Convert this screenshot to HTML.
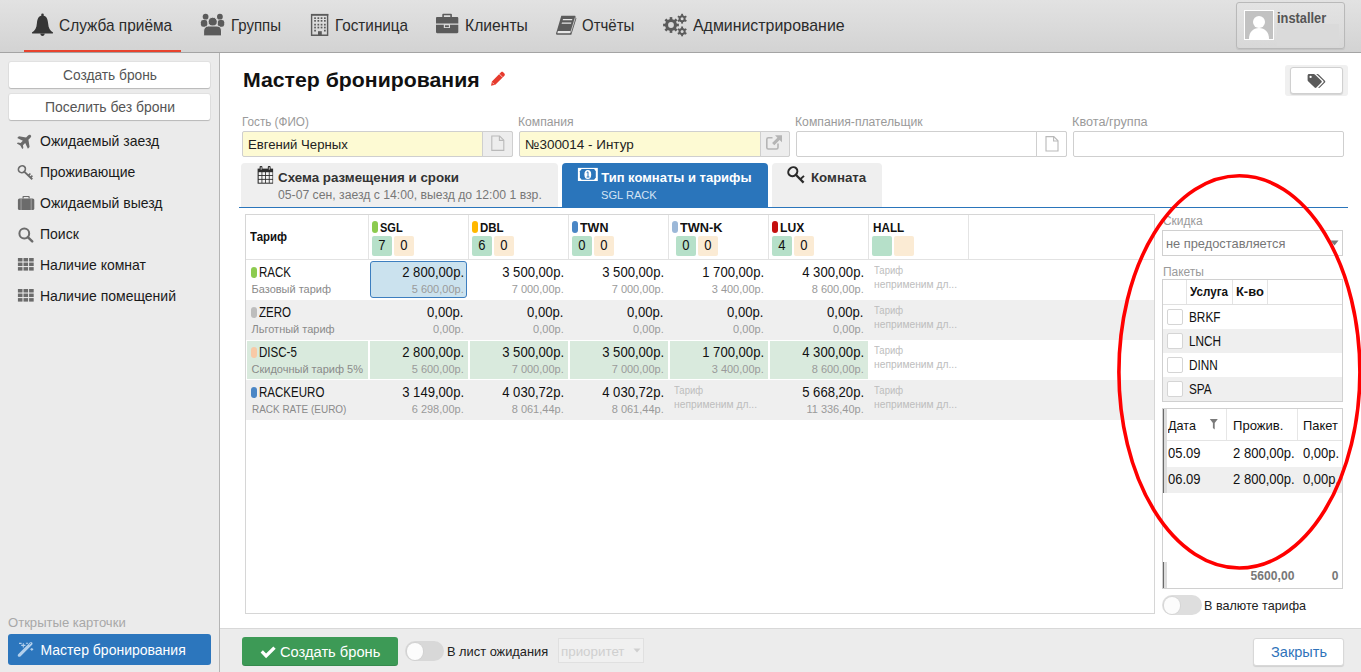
<!DOCTYPE html>
<html><head><meta charset="utf-8"><style>
html,body{margin:0;padding:0;}
body{width:1361px;height:672px;overflow:hidden;position:relative;background:#fff;font-family:"Liberation Sans",sans-serif;}
svg{display:block;}
</style></head><body>
<div style="position:absolute;left:0px;top:0px;width:1361px;height:52px;background:linear-gradient(#e2e2e2,#d3d3d3);"></div>
<div style="position:absolute;left:0px;top:52px;width:1361px;height:1px;background:#a4a4a4;"></div>
<div style="position:absolute;left:24px;top:50px;width:157px;height:2px;background:#e8432d;"></div>
<div style="position:absolute;left:1236px;top:2px;width:109px;height:47px;background:linear-gradient(#e3e3e3,#d8d8d8);border:1px solid #b9b9b9;border-radius:3px;box-sizing:border-box;box-shadow:0 1px 1px rgba(0,0,0,.08);"></div>
<div style="position:absolute;left:1277px;top:24px;width:62px;height:22px;background:#dadada;"></div>
<div style="position:absolute;left:1244px;top:10px;width:30px;height:30px;background:#c2c2c2;border:1px solid #fff;box-sizing:border-box;overflow:hidden;"><svg width="28" height="28" viewBox="0 0 28 28"><circle cx="14" cy="11" r="6" fill="#fff"/><path d="M4 28c0-7 4-11 10-11s10 4 10 11z" fill="#fff"/></svg></div>
<div style="position:absolute;left:0px;top:53px;width:219px;height:619px;background:#ebebeb;"></div>
<div style="position:absolute;left:219px;top:53px;width:1px;height:619px;background:#b5b5b5;"></div>
<div style="position:absolute;left:9px;top:62px;width:201px;height:26px;background:#fff;border-radius:2px;box-shadow:0 1px 1px rgba(0,0,0,.18),0 0 0 1px rgba(0,0,0,.04);"></div>
<div style="position:absolute;left:9px;top:94px;width:201px;height:26px;background:#fff;border-radius:2px;box-shadow:0 1px 1px rgba(0,0,0,.18),0 0 0 1px rgba(0,0,0,.04);"></div>
<div style="position:absolute;left:8px;top:634px;width:203px;height:31px;background:#2c76bd;border-radius:3px;"></div>
<div style="position:absolute;left:1285px;top:65px;width:63px;height:31px;background:#f0f0f0;border-radius:3px;"></div>
<div style="position:absolute;left:1290px;top:67px;width:53px;height:27px;background:#fff;border:1px solid #d0d0d0;border-radius:3px;box-sizing:border-box;box-shadow:0 1px 1px rgba(0,0,0,.12);"></div>
<div style="position:absolute;left:242px;top:131px;width:271px;height:26px;background:#fdfad3;border:1px solid #cfcfcf;box-sizing:border-box;border-radius:2px;"></div>
<div style="position:absolute;left:482px;top:131px;width:31px;height:26px;background:#ededed;border:1px solid #cfcfcf;box-sizing:border-box;border-radius:0 2px 2px 0;"></div>
<div style="position:absolute;left:519px;top:131px;width:271px;height:26px;background:#fdfad3;border:1px solid #cfcfcf;box-sizing:border-box;border-radius:2px;"></div>
<div style="position:absolute;left:760px;top:131px;width:30px;height:26px;background:#ededed;border:1px solid #cfcfcf;box-sizing:border-box;border-radius:0 2px 2px 0;"></div>
<div style="position:absolute;left:796px;top:131px;width:271px;height:26px;background:#fff;border:1px solid #cfcfcf;box-sizing:border-box;border-radius:2px;"></div>
<div style="position:absolute;left:1036px;top:131px;width:31px;height:26px;background:#fff;border:1px solid #cfcfcf;box-sizing:border-box;border-radius:0 2px 2px 0;"></div>
<div style="position:absolute;left:1073px;top:131px;width:271px;height:26px;background:#fff;border:1px solid #cfcfcf;box-sizing:border-box;border-radius:2px;"></div>
<div style="position:absolute;left:241px;top:163px;width:317px;height:44px;background:#efefef;border-radius:4px 4px 0 0;"></div>
<div style="position:absolute;left:562px;top:163px;width:206px;height:45px;background:#2a75bb;border-radius:4px 4px 0 0;"></div>
<div style="position:absolute;left:772px;top:163px;width:110px;height:44px;background:#efefef;border-radius:4px 4px 0 0;"></div>
<div style="position:absolute;left:239px;top:207px;width:1109px;height:1px;background:#2a75bb;"></div>
<div style="position:absolute;left:245px;top:214px;width:910px;height:400px;border:1px solid #d6d6d6;box-sizing:border-box;background:#fff;"></div>
<div style="position:absolute;left:246px;top:259px;width:908px;height:1px;background:#e2e2e2;"></div>
<div style="position:absolute;left:368px;top:215px;width:1px;height:44px;background:#e4e4e4;"></div>
<div style="position:absolute;left:468px;top:215px;width:1px;height:44px;background:#e4e4e4;"></div>
<div style="position:absolute;left:568px;top:215px;width:1px;height:44px;background:#e4e4e4;"></div>
<div style="position:absolute;left:668px;top:215px;width:1px;height:44px;background:#e4e4e4;"></div>
<div style="position:absolute;left:768px;top:215px;width:1px;height:44px;background:#e4e4e4;"></div>
<div style="position:absolute;left:868px;top:215px;width:1px;height:44px;background:#e4e4e4;"></div>
<div style="position:absolute;left:968px;top:215px;width:1px;height:44px;background:#e4e4e4;"></div>
<div style="position:absolute;left:246px;top:300px;width:908px;height:40px;background:#efefef;"></div>
<div style="position:absolute;left:246px;top:380px;width:908px;height:40px;background:#efefef;"></div>
<div style="position:absolute;left:247px;top:341px;width:121px;height:38px;background:#d9eadd;"></div>
<div style="position:absolute;left:370px;top:341px;width:98px;height:38px;background:#d9eadd;"></div>
<div style="position:absolute;left:470px;top:341px;width:98px;height:38px;background:#d9eadd;"></div>
<div style="position:absolute;left:570px;top:341px;width:98px;height:38px;background:#d9eadd;"></div>
<div style="position:absolute;left:670px;top:341px;width:98px;height:38px;background:#d9eadd;"></div>
<div style="position:absolute;left:770px;top:341px;width:98px;height:38px;background:#d9eadd;"></div>
<div style="position:absolute;left:370px;top:261px;width:97px;height:37px;background:#cbe2ee;border:1px solid #3d7ebf;border-radius:3px;box-sizing:border-box;"></div>
<div style="position:absolute;left:372px;top:221px;width:6px;height:12px;background:#8ccb4f;border-radius:3px;"></div>
<div style="position:absolute;left:372px;top:236px;width:20px;height:20px;background:#b6e0c9;border-radius:2px;"></div>
<div style="position:absolute;left:394px;top:236px;width:20px;height:20px;background:#fbebd4;border-radius:2px;"></div>
<div style="position:absolute;left:472px;top:221px;width:6px;height:12px;background:#ffb800;border-radius:3px;"></div>
<div style="position:absolute;left:472px;top:236px;width:20px;height:20px;background:#b6e0c9;border-radius:2px;"></div>
<div style="position:absolute;left:494px;top:236px;width:20px;height:20px;background:#fbebd4;border-radius:2px;"></div>
<div style="position:absolute;left:572px;top:221px;width:6px;height:12px;background:#4a86c5;border-radius:3px;"></div>
<div style="position:absolute;left:572px;top:236px;width:20px;height:20px;background:#b6e0c9;border-radius:2px;"></div>
<div style="position:absolute;left:594px;top:236px;width:20px;height:20px;background:#fbebd4;border-radius:2px;"></div>
<div style="position:absolute;left:672px;top:221px;width:6px;height:12px;background:#9cb8d8;border-radius:3px;"></div>
<div style="position:absolute;left:676px;top:236px;width:20px;height:20px;background:#b6e0c9;border-radius:2px;"></div>
<div style="position:absolute;left:698px;top:236px;width:20px;height:20px;background:#fbebd4;border-radius:2px;"></div>
<div style="position:absolute;left:772px;top:221px;width:6px;height:12px;background:#c40f0f;border-radius:3px;"></div>
<div style="position:absolute;left:772px;top:236px;width:20px;height:20px;background:#b6e0c9;border-radius:2px;"></div>
<div style="position:absolute;left:794px;top:236px;width:20px;height:20px;background:#fbebd4;border-radius:2px;"></div>
<div style="position:absolute;left:872px;top:236px;width:20px;height:20px;background:#b6e0c9;border-radius:2px;"></div>
<div style="position:absolute;left:894px;top:236px;width:20px;height:20px;background:#fbebd4;border-radius:2px;"></div>
<div style="position:absolute;left:251px;top:266.5px;width:6px;height:11.5px;background:#8ccb4f;border-radius:3px;"></div>
<div style="position:absolute;left:251px;top:306.5px;width:6px;height:11.5px;background:#bdbdbd;border-radius:3px;"></div>
<div style="position:absolute;left:251px;top:346.5px;width:6px;height:11.5px;background:#f8c9a6;border-radius:3px;"></div>
<div style="position:absolute;left:251px;top:386.5px;width:6px;height:11.5px;background:#4a86c5;border-radius:3px;"></div>
<div style="position:absolute;left:1162px;top:230px;width:181px;height:26px;background:#fff;border:1px solid #d0d0d0;box-sizing:border-box;"></div>
<svg style="position:absolute;left:1330px;top:240px;" width="9" height="6" viewBox="0 9 6" preserveAspectRatio="none"><path d="M0.5 0.5h8L4.5 5.5z" fill="#777"/></svg>
<div style="position:absolute;left:1162px;top:279px;width:181px;height:123px;background:#fff;border:1px solid #d0d0d0;box-sizing:border-box;"></div>
<div style="position:absolute;left:1163px;top:304px;width:179px;height:1px;background:#e0e0e0;"></div>
<div style="position:absolute;left:1186px;top:280px;width:1px;height:24px;background:#e4e4e4;"></div>
<div style="position:absolute;left:1232px;top:280px;width:1px;height:24px;background:#e4e4e4;"></div>
<div style="position:absolute;left:1267px;top:280px;width:1px;height:24px;background:#e4e4e4;"></div>
<div style="position:absolute;left:1163px;top:329px;width:179px;height:24px;background:#efefef;"></div>
<div style="position:absolute;left:1163px;top:377px;width:179px;height:24px;background:#efefef;"></div>
<div style="position:absolute;left:1167px;top:309px;width:16px;height:16px;background:#fff;border:1px solid #d5d5d5;border-radius:2px;box-sizing:border-box;"></div>
<div style="position:absolute;left:1167px;top:333px;width:16px;height:16px;background:#fff;border:1px solid #d5d5d5;border-radius:2px;box-sizing:border-box;"></div>
<div style="position:absolute;left:1167px;top:357px;width:16px;height:16px;background:#fff;border:1px solid #d5d5d5;border-radius:2px;box-sizing:border-box;"></div>
<div style="position:absolute;left:1167px;top:381px;width:16px;height:16px;background:#fff;border:1px solid #d5d5d5;border-radius:2px;box-sizing:border-box;"></div>
<div style="position:absolute;left:1162px;top:408px;width:181px;height:181px;background:#fff;border:1px solid #d0d0d0;box-sizing:border-box;"></div>
<div style="position:absolute;left:1163px;top:440px;width:179px;height:1px;background:#e4e4e4;"></div>
<div style="position:absolute;left:1165px;top:467px;width:177px;height:26px;background:#efefef;"></div>
<div style="position:absolute;left:1163px;top:409px;width:1px;height:84px;background:#6a6a6a;"></div>
<div style="position:absolute;left:1164px;top:409px;width:3px;height:84px;background:#dcdcdc;"></div>
<div style="position:absolute;left:1163px;top:562px;width:1px;height:26px;background:#6a6a6a;"></div>
<div style="position:absolute;left:1164px;top:562px;width:3px;height:26px;background:#dcdcdc;"></div>
<div style="position:absolute;left:1226px;top:409px;width:1px;height:31px;background:#e6e6e6;"></div>
<div style="position:absolute;left:1297px;top:409px;width:1px;height:31px;background:#e6e6e6;"></div>
<div style="position:absolute;left:1162px;top:595px;width:40px;height:20px;background:#dedede;border-radius:10px;"></div>
<div style="position:absolute;left:1163.5px;top:597px;width:16.5px;height:16.5px;background:#fcfcfc;border-radius:50%;box-shadow:0 0 0 1px #d6d6d6;"></div>
<div style="position:absolute;left:220px;top:628px;width:1141px;height:44px;background:#ececec;"></div>
<div style="position:absolute;left:220px;top:628px;width:1141px;height:1px;background:#d8d8d8;"></div>
<div style="position:absolute;left:242px;top:637px;width:156px;height:29px;background:#3d9a56;border-radius:3px;box-shadow:inset 0 -1px 0 rgba(0,0,0,.1);"></div>
<div style="position:absolute;left:405px;top:641px;width:39px;height:20px;background:#d8d8d8;border-radius:10px;"></div>
<div style="position:absolute;left:406.5px;top:643px;width:16.5px;height:16.5px;background:#fcfcfc;border-radius:50%;box-shadow:0 0 0 1px #d2d2d2;"></div>
<div style="position:absolute;left:558px;top:638px;width:86px;height:25px;background:#f0f0f0;border:1px solid #e0e0e0;box-sizing:border-box;"></div>
<svg style="position:absolute;left:633px;top:648px;" width="8" height="5" viewBox="0 8 5" preserveAspectRatio="none"><path d="M0.5 0.5h7L4 4.5z" fill="#cfcfcf"/></svg>
<div style="position:absolute;left:1253px;top:638px;width:91px;height:28px;background:#fff;border:1px solid #d8d8d8;border-radius:3px;box-sizing:border-box;box-shadow:0 1px 1px rgba(0,0,0,.12);"></div>
<svg style="position:absolute;left:30px;top:12px;" width="25" height="25" viewBox="30 12 25 25"><circle cx="42.5" cy="14.9" r="1.3" fill="#363636"/><path d="M42.5 15.4C38.2 15.6 37.2 19.3 36.9 23.2 36.6 28 35 30.6 31.9 32.6L32.2 33.6H52.8L53.1 32.6C50 30.6 48.4 28 48.1 23.2 47.8 19.3 46.8 15.6 42.5 15.4Z" fill="#363636"/><path d="M40.3 33.4H44.7C44.7 35 43.7 35.9 42.5 35.9S40.3 35 40.3 33.4Z" fill="#363636"/></svg>
<svg style="position:absolute;left:199px;top:12px;" width="27" height="25" viewBox="199 12 27 25"><circle cx="205.6" cy="16.7" r="2.9" fill="#5b5b5b"/><circle cx="219.9" cy="16.7" r="2.9" fill="#5b5b5b"/><rect x="200.9" y="20" width="6.4" height="6.8" rx="2.2" fill="#5b5b5b"/><rect x="217.8" y="20" width="6.4" height="6.8" rx="2.2" fill="#5b5b5b"/><circle cx="212.7" cy="21.8" r="4.6" fill="#5b5b5b" stroke="#dcdcdc" stroke-width="1"/><path d="M203.6 35.9V31C203.6 28 205.5 26 208.5 26H217C220 26 221.5 28 221.5 31V35.9Z" fill="#5b5b5b" stroke="#dcdcdc" stroke-width="1"/></svg>
<svg style="position:absolute;left:309px;top:12px;" width="21" height="25" viewBox="309 12 21 25"><path d="M311.6 14.6H327.6V35.2H311.6Z" fill="none" stroke="#5b5b5b" stroke-width="1.4"/><rect x="311" y="13.9" width="17.3" height="1.8" fill="#5b5b5b"/><rect x="314.2" y="17.3" width="1.7" height="1.7" fill="#5b5b5b"/><rect x="317.5" y="17.3" width="1.7" height="1.7" fill="#5b5b5b"/><rect x="320.7" y="17.3" width="1.7" height="1.7" fill="#5b5b5b"/><rect x="324.0" y="17.3" width="1.7" height="1.7" fill="#5b5b5b"/><rect x="314.2" y="20.0" width="1.7" height="1.7" fill="#5b5b5b"/><rect x="317.5" y="20.0" width="1.7" height="1.7" fill="#5b5b5b"/><rect x="320.7" y="20.0" width="1.7" height="1.7" fill="#5b5b5b"/><rect x="324.0" y="20.0" width="1.7" height="1.7" fill="#5b5b5b"/><rect x="314.2" y="23.8" width="1.7" height="1.7" fill="#5b5b5b"/><rect x="317.5" y="23.8" width="1.7" height="1.7" fill="#5b5b5b"/><rect x="320.7" y="23.8" width="1.7" height="1.7" fill="#5b5b5b"/><rect x="324.0" y="23.8" width="1.7" height="1.7" fill="#5b5b5b"/><rect x="314.2" y="26.7" width="1.7" height="1.7" fill="#5b5b5b"/><rect x="317.5" y="26.7" width="1.7" height="1.7" fill="#5b5b5b"/><rect x="320.7" y="26.7" width="1.7" height="1.7" fill="#5b5b5b"/><rect x="324.0" y="26.7" width="1.7" height="1.7" fill="#5b5b5b"/><rect x="314.2" y="29.8" width="1.7" height="1.7" fill="#5b5b5b"/><rect x="324.0" y="29.8" width="1.7" height="1.7" fill="#5b5b5b"/><rect x="318" y="31.2" width="3.8" height="4.4" fill="#5b5b5b"/></svg>
<svg style="position:absolute;left:434px;top:12px;" width="26" height="23" viewBox="434 12 26 23"><path d="M442.3 17.2V14.6C442.3 14.1 442.7 13.8 443.2 13.8H451C451.5 13.8 451.9 14.1 451.9 14.6V17.2H450.3V15.3H443.9V17.2Z" fill="#5b5b5b"/><path d="M437.2 16.9H457.1C457.8 16.9 458.3 17.4 458.3 18.1V23.6H436V18.1C436 17.4 436.5 16.9 437.2 16.9Z" fill="#5b5b5b"/><path d="M436 24.8H443.8V28H450V24.8H458.3V32C458.3 32.7 457.8 33.2 457.1 33.2H437.2C436.5 33.2 436 32.7 436 32Z" fill="#5b5b5b"/><rect x="445" y="25.3" width="3.9" height="1.8" fill="#5b5b5b"/></svg>
<svg style="position:absolute;left:554px;top:13px;" width="24" height="24" viewBox="554 13 24 24"><path d="M561.3 15.8H575.1L576.4 18.6 571.3 34.8H557.4C556.4 34.8 555.8 34 556.1 33L556.8 30.9Z" fill="#5b5b5b"/><path d="M557.9 31.1H570.6L569.9 33.2H557.3Z" fill="#e6e6e6"/><path d="M575.4 17.3L570.6 32.8" stroke="#dcdcdc" stroke-width="0.8"/><path d="M563 18.9H572.4L572 20.2H562.6Z" fill="#e6e6e6"/><path d="M562 22.4H571.4L571 23.7H561.6Z" fill="#e6e6e6"/></svg>
<svg style="position:absolute;left:660px;top:11px;" width="30" height="28" viewBox="660 11 30 28"><circle cx="671" cy="25" r="6.0" fill="#5b5b5b"/><rect x="669.7" y="17.1" width="2.6" height="2.9000000000000004" fill="#5b5b5b" transform="rotate(0.0 671 25)"/><rect x="669.7" y="17.1" width="2.6" height="2.9000000000000004" fill="#5b5b5b" transform="rotate(45.0 671 25)"/><rect x="669.7" y="17.1" width="2.6" height="2.9000000000000004" fill="#5b5b5b" transform="rotate(90.0 671 25)"/><rect x="669.7" y="17.1" width="2.6" height="2.9000000000000004" fill="#5b5b5b" transform="rotate(135.0 671 25)"/><rect x="669.7" y="17.1" width="2.6" height="2.9000000000000004" fill="#5b5b5b" transform="rotate(180.0 671 25)"/><rect x="669.7" y="17.1" width="2.6" height="2.9000000000000004" fill="#5b5b5b" transform="rotate(225.0 671 25)"/><rect x="669.7" y="17.1" width="2.6" height="2.9000000000000004" fill="#5b5b5b" transform="rotate(270.0 671 25)"/><rect x="669.7" y="17.1" width="2.6" height="2.9000000000000004" fill="#5b5b5b" transform="rotate(315.0 671 25)"/><circle cx="671" cy="25" r="2.9" fill="#d9d9d9"/><circle cx="682.1" cy="18.7" r="3.5" fill="#5b5b5b"/><rect x="681.15" y="13.799999999999999" width="1.9" height="2.4000000000000004" fill="#5b5b5b" transform="rotate(0.0 682.1 18.7)"/><rect x="681.15" y="13.799999999999999" width="1.9" height="2.4000000000000004" fill="#5b5b5b" transform="rotate(60.0 682.1 18.7)"/><rect x="681.15" y="13.799999999999999" width="1.9" height="2.4000000000000004" fill="#5b5b5b" transform="rotate(120.0 682.1 18.7)"/><rect x="681.15" y="13.799999999999999" width="1.9" height="2.4000000000000004" fill="#5b5b5b" transform="rotate(180.0 682.1 18.7)"/><rect x="681.15" y="13.799999999999999" width="1.9" height="2.4000000000000004" fill="#5b5b5b" transform="rotate(240.0 682.1 18.7)"/><rect x="681.15" y="13.799999999999999" width="1.9" height="2.4000000000000004" fill="#5b5b5b" transform="rotate(300.0 682.1 18.7)"/><circle cx="682.1" cy="18.7" r="1.5" fill="#dcdcdc"/><circle cx="682.1" cy="31.4" r="3.5" fill="#5b5b5b"/><rect x="681.15" y="26.5" width="1.9" height="2.4000000000000004" fill="#5b5b5b" transform="rotate(0.0 682.1 31.4)"/><rect x="681.15" y="26.5" width="1.9" height="2.4000000000000004" fill="#5b5b5b" transform="rotate(60.0 682.1 31.4)"/><rect x="681.15" y="26.5" width="1.9" height="2.4000000000000004" fill="#5b5b5b" transform="rotate(120.0 682.1 31.4)"/><rect x="681.15" y="26.5" width="1.9" height="2.4000000000000004" fill="#5b5b5b" transform="rotate(180.0 682.1 31.4)"/><rect x="681.15" y="26.5" width="1.9" height="2.4000000000000004" fill="#5b5b5b" transform="rotate(240.0 682.1 31.4)"/><rect x="681.15" y="26.5" width="1.9" height="2.4000000000000004" fill="#5b5b5b" transform="rotate(300.0 682.1 31.4)"/><circle cx="682.1" cy="31.4" r="1.5" fill="#d6d6d6"/></svg>
<svg style="position:absolute;left:16px;top:133px;" width="17" height="16" viewBox="16 133 17 16"><g transform="translate(25.3 140.6) rotate(-45) scale(0.92)"><path d="M8.3 0C8.3 -1.3 7.3 -1.8 6 -1.8H3L-1.6 -8.2H-4.2L-2 -1.8H-5.4L-7.2 -4.2H-8.8L-7.6 0-8.8 4.2H-7.2L-5.4 1.8H-2L-4.2 8.2H-1.6L3 1.8H6C7.3 1.8 8.3 1.3 8.3 0Z" fill="#6b6b6b"/></g></svg>
<svg style="position:absolute;left:16px;top:163px;" width="19" height="18" viewBox="16 163 19 18"><ellipse cx="21.9" cy="169.2" rx="3.3" ry="3.6" transform="rotate(45 21.9 169.2)" fill="none" stroke="#6b6b6b" stroke-width="1.7"/><path d="M24.2 171.6L32.3 179.3" stroke="#6b6b6b" stroke-width="1.9"/><path d="M28.3 175.6L30.4 173.5M30.4 177.6L32.4 175.6" stroke="#6b6b6b" stroke-width="1.6"/></svg>
<svg style="position:absolute;left:16px;top:194px;" width="20" height="17" viewBox="16 194 20 17"><path d="M22.5 198.6V196.8C22.5 196.3 22.9 195.9 23.4 195.9H28.8C29.3 195.9 29.7 196.3 29.7 196.8V198.6H28.5V197.1H23.7V198.6Z" fill="#6b6b6b"/><rect x="17.9" y="198.5" width="16.4" height="11.5" rx="1.6" fill="#6b6b6b"/><rect x="20.6" y="198.5" width="0.9" height="11.5" fill="#a8a8a8"/><rect x="30.7" y="198.5" width="0.9" height="11.5" fill="#a8a8a8"/></svg>
<svg style="position:absolute;left:16px;top:225px;" width="19" height="18" viewBox="16 225 19 18"><circle cx="24.3" cy="233.5" r="4.9" fill="none" stroke="#6b6b6b" stroke-width="2"/><path d="M27.8 237.1L32.2 241.4" stroke="#6b6b6b" stroke-width="2.4" stroke-linecap="round"/></svg>
<svg style="position:absolute;left:16px;top:256px;" width="20" height="18" viewBox="16 256 20 18"><rect x="17.90" y="258.00" width="4.6" height="3.5" fill="#6b6b6b"/><rect x="17.90" y="262.55" width="4.6" height="3.5" fill="#6b6b6b"/><rect x="17.90" y="267.10" width="4.6" height="3.5" fill="#6b6b6b"/><rect x="23.50" y="258.00" width="4.6" height="3.5" fill="#6b6b6b"/><rect x="23.50" y="262.55" width="4.6" height="3.5" fill="#6b6b6b"/><rect x="23.50" y="267.10" width="4.6" height="3.5" fill="#6b6b6b"/><rect x="29.10" y="258.00" width="4.6" height="3.5" fill="#6b6b6b"/><rect x="29.10" y="262.55" width="4.6" height="3.5" fill="#6b6b6b"/><rect x="29.10" y="267.10" width="4.6" height="3.5" fill="#6b6b6b"/></svg>
<svg style="position:absolute;left:16px;top:287px;" width="20" height="18" viewBox="16 287 20 18"><rect x="17.90" y="289.00" width="4.6" height="3.5" fill="#6b6b6b"/><rect x="17.90" y="293.55" width="4.6" height="3.5" fill="#6b6b6b"/><rect x="17.90" y="298.10" width="4.6" height="3.5" fill="#6b6b6b"/><rect x="23.50" y="289.00" width="4.6" height="3.5" fill="#6b6b6b"/><rect x="23.50" y="293.55" width="4.6" height="3.5" fill="#6b6b6b"/><rect x="23.50" y="298.10" width="4.6" height="3.5" fill="#6b6b6b"/><rect x="29.10" y="289.00" width="4.6" height="3.5" fill="#6b6b6b"/><rect x="29.10" y="293.55" width="4.6" height="3.5" fill="#6b6b6b"/><rect x="29.10" y="298.10" width="4.6" height="3.5" fill="#6b6b6b"/></svg>
<svg style="position:absolute;left:14px;top:638px;" width="24" height="24" viewBox="14 638 24 24"><path d="M18.2 654.2L29.9 642.6C30.5 642 31.5 642 32.1 642.6 32.7 643.2 32.7 644.2 32.1 644.8L20.4 656.4C19.8 657 18.8 657 18.2 656.4 17.6 655.8 17.6 654.8 18.2 654.2Z" fill="#b3d0ec"/><path d="M29.3 644.6L30.8 643.1" stroke="#2c76bd" stroke-width="0.9"/><path d="M19 643.4H21.6M23.3 643.3V647.6M21.2 645.4H25.4M25.9 643.2H28M30.4 649.4H33.2M31.8 648V650.8" stroke="#b3d0ec" stroke-width="1.1"/></svg>
<svg style="position:absolute;left:489px;top:71px;" width="18" height="17" viewBox="489 71 18 17"><path d="M491 85.8L491.9 81.4 501 72.3C501.6 71.7 502.6 71.7 503.2 72.3L504.4 73.5C505 74.1 505 75.1 504.4 75.7L495.3 84.8Z" fill="#e63b2e"/><path d="M499.3 74L502.7 77.4" stroke="#fff" stroke-width="0.7"/><path d="M492.3 82.5L494.2 84.4" stroke="#f6c5c0" stroke-width="0.9"/></svg>
<svg style="position:absolute;left:1305px;top:72px;" width="23" height="18" viewBox="1305 72 23 18"><path d="M1307.6 75.4V80C1307.6 80.5 1307.8 80.9 1308.1 81.2L1314.6 87.6C1315.1 88.1 1315.9 88.1 1316.4 87.6L1321.4 82.6C1321.9 82.1 1321.9 81.3 1321.4 80.8L1314.9 74.4C1314.6 74.1 1314.2 73.9 1313.7 73.9H1309.1C1308.3 73.9 1307.6 74.6 1307.6 75.4Z" fill="#5a5a5a"/><circle cx="1310.6" cy="76.9" r="1.15" fill="#fff"/><path d="M1316.2 73.9H1317.4C1317.9 73.9 1318.3 74.1 1318.6 74.4L1324.9 80.8C1325.4 81.3 1325.4 82.1 1324.9 82.6L1319.9 87.6C1319.4 88.1 1318.7 88.1 1318.2 87.7L1323.3 82.6C1323.8 82.1 1323.8 81.3 1323.3 80.8Z" fill="#5a5a5a"/></svg>
<svg style="position:absolute;left:490px;top:134px;" width="16" height="19" viewBox="490 134 16 19"><path d="M491.8 136.0H499.59999999999997L503.8 140.20000000000002V150.4H491.8Z" fill="none" stroke="#b9b9b9" stroke-width="1.1"/><path d="M499.4 136.0V140.4H503.8" fill="none" stroke="#b9b9b9" stroke-width="1.1"/></svg>
<svg style="position:absolute;left:1044px;top:134px;" width="16" height="19" viewBox="1044 134 16 19"><path d="M1046.0 136.6H1053.8000000000002L1058.0 140.8V151H1046.0Z" fill="none" stroke="#b9b9b9" stroke-width="1.1"/><path d="M1053.6000000000001 136.6V141H1058.0" fill="none" stroke="#b9b9b9" stroke-width="1.1"/></svg>
<svg style="position:absolute;left:764px;top:133px;" width="20" height="18" viewBox="764 133 20 18"><path d="M772.5 137.8H768.4C767.5 137.8 766.8 138.5 766.8 139.4V147.4C766.8 148.3 767.5 149 768.4 149H776.4C777.3 149 778 148.3 778 147.4V143.6" fill="none" stroke="#b5b5b5" stroke-width="1.6"/><path d="M775 135.3H782V142.3L779.6 139.9 774.3 145.2 772.1 143 777.4 137.7Z" fill="#b5b5b5"/></svg>
<svg style="position:absolute;left:255px;top:164px;" width="21" height="22" viewBox="255 164 21 22"><path d="M257.6 168.6H273.1V183.7H257.6Z" fill="#2e2e2e"/><rect x="259.6" y="166.1" width="2.8" height="4.2" rx="0.9" fill="#2e2e2e"/><rect x="267.8" y="166.1" width="2.8" height="4.2" rx="0.9" fill="#2e2e2e"/><rect x="260.7" y="167.2" width="0.9" height="2.5" fill="#ddd"/><rect x="268.8" y="167.2" width="0.9" height="2.5" fill="#ddd"/><rect x="258.70" y="172.20" width="2.8" height="2.9" fill="#f4f4f4"/><rect x="262.35" y="172.20" width="2.8" height="2.9" fill="#f4f4f4"/><rect x="266.00" y="172.20" width="2.8" height="2.9" fill="#f4f4f4"/><rect x="269.65" y="172.20" width="2.8" height="2.9" fill="#f4f4f4"/><rect x="258.70" y="176.00" width="2.8" height="2.9" fill="#f4f4f4"/><rect x="262.35" y="176.00" width="2.8" height="2.9" fill="#f4f4f4"/><rect x="266.00" y="176.00" width="2.8" height="2.9" fill="#f4f4f4"/><rect x="269.65" y="176.00" width="2.8" height="2.9" fill="#f4f4f4"/><rect x="258.70" y="179.80" width="2.8" height="2.9" fill="#f4f4f4"/><rect x="262.35" y="179.80" width="2.8" height="2.9" fill="#f4f4f4"/><rect x="266.00" y="179.80" width="2.8" height="2.9" fill="#f4f4f4"/><rect x="269.65" y="179.80" width="2.8" height="2.9" fill="#f4f4f4"/></svg>
<svg style="position:absolute;left:576px;top:166px;" width="24" height="17" viewBox="576 166 24 17"><rect x="577.9" y="167.9" width="19.9" height="13.1" fill="#fff"/><path d="M581.6 169.1H594.1L595.8 171.2V177.6L594.1 179.7H581.6L579.9 177.6V171.2Z" fill="#2a75bb"/><ellipse cx="587.8" cy="174.4" rx="3.4" ry="4.5" fill="#fff"/><path d="M586.6 172.6L588 171.8V177M586.6 177H589.4" stroke="#2a75bb" stroke-width="1" fill="none"/></svg>
<svg style="position:absolute;left:786px;top:165px;" width="22" height="20" viewBox="786 165 22 20"><ellipse cx="792.8" cy="171.7" rx="4.2" ry="4.8" transform="rotate(45 792.8 171.7)" fill="none" stroke="#2a2a2a" stroke-width="2.1"/><path d="M795.8 174.8L803.6 182.6" stroke="#2a2a2a" stroke-width="2.3"/><path d="M800.3 179.3L804 175.9" stroke="#2a2a2a" stroke-width="1.9"/></svg>
<svg style="position:absolute;left:1208px;top:417px;" width="12" height="14" viewBox="1208 417 12 14"><path d="M1209.8 418.9H1217.8L1214.7 423V429.5L1212.9 428V423Z" fill="#7a7a7a"/></svg>
<svg style="position:absolute;left:259px;top:645px;" width="18" height="15" viewBox="259 645 18 15"><path d="M260.6 652.6L262.9 650.3 266.1 653.5 273.3 646.4 275.7 648.7 266.1 658.2Z" fill="#fff"/></svg>
<svg style="position:absolute;left:0;top:0;z-index:20" width="1361" height="672"><ellipse cx="1239.4" cy="371.9" rx="120.5" ry="196.1" fill="none" stroke="#ff0000" stroke-width="3.6"/></svg>
<div style="position:absolute;top:16.82px;font-size:17px;line-height:1;font-weight:400;color:#2b2b2b;white-space:pre;z-index:5;left:58.80px;transform:scaleX(0.9075);transform-origin:left center;">Служба приёма</div>
<div style="position:absolute;top:16.82px;font-size:17px;line-height:1;font-weight:400;color:#2b2b2b;white-space:pre;z-index:5;left:231.00px;transform:scaleX(0.8808);transform-origin:left center;">Группы</div>
<div style="position:absolute;top:16.82px;font-size:17px;line-height:1;font-weight:400;color:#2b2b2b;white-space:pre;z-index:5;left:334.60px;transform:scaleX(0.8981);transform-origin:left center;">Гостиница</div>
<div style="position:absolute;top:16.82px;font-size:17px;line-height:1;font-weight:400;color:#2b2b2b;white-space:pre;z-index:5;left:464.50px;transform:scaleX(0.9227);transform-origin:left center;">Клиенты</div>
<div style="position:absolute;top:16.82px;font-size:17px;line-height:1;font-weight:400;color:#2b2b2b;white-space:pre;z-index:5;left:582.00px;transform:scaleX(0.8815);transform-origin:left center;">Отчёты</div>
<div style="position:absolute;top:16.82px;font-size:17px;line-height:1;font-weight:400;color:#2b2b2b;white-space:pre;z-index:5;left:693.20px;transform:scaleX(0.9352);transform-origin:left center;">Администрирование</div>
<div style="position:absolute;top:10.76px;font-size:14px;line-height:1;font-weight:700;color:#555;white-space:pre;z-index:5;left:1277.40px;transform:scaleX(0.9161);transform-origin:left center;">installer</div>
<div style="position:absolute;top:67.96px;font-size:14px;line-height:1;font-weight:400;color:#555;white-space:pre;z-index:5;left:-390.00px;width:1000px;text-align:center;transform:scaleX(0.9820);transform-origin:center center;">Создать бронь</div>
<div style="position:absolute;top:100.21px;font-size:14px;line-height:1;font-weight:400;color:#555;white-space:pre;z-index:5;left:-390.00px;width:1000px;text-align:center;transform:scaleX(0.9958);transform-origin:center center;">Поселить без брони</div>
<div style="position:absolute;top:132.91px;font-size:15px;line-height:1;font-weight:400;color:#1a1a1a;white-space:pre;z-index:5;left:40.30px;transform:scaleX(0.9333);transform-origin:left center;">Ожидаемый заезд</div>
<div style="position:absolute;top:163.91px;font-size:15px;line-height:1;font-weight:400;color:#1a1a1a;white-space:pre;z-index:5;left:40.30px;transform:scaleX(0.9333);transform-origin:left center;">Проживающие</div>
<div style="position:absolute;top:194.91px;font-size:15px;line-height:1;font-weight:400;color:#1a1a1a;white-space:pre;z-index:5;left:40.30px;transform:scaleX(0.9333);transform-origin:left center;">Ожидаемый выезд</div>
<div style="position:absolute;top:225.91px;font-size:15px;line-height:1;font-weight:400;color:#1a1a1a;white-space:pre;z-index:5;left:40.30px;transform:scaleX(0.9333);transform-origin:left center;">Поиск</div>
<div style="position:absolute;top:256.91px;font-size:15px;line-height:1;font-weight:400;color:#1a1a1a;white-space:pre;z-index:5;left:40.30px;transform:scaleX(0.9333);transform-origin:left center;">Наличие комнат</div>
<div style="position:absolute;top:287.91px;font-size:15px;line-height:1;font-weight:400;color:#1a1a1a;white-space:pre;z-index:5;left:40.30px;transform:scaleX(0.9333);transform-origin:left center;">Наличие помещений</div>
<div style="position:absolute;top:615.90px;font-size:13px;line-height:1;font-weight:400;color:#a8a8a8;white-space:pre;z-index:5;left:8.30px;transform:scaleX(1.0052);transform-origin:left center;">Открытые карточки</div>
<div style="position:absolute;top:642.76px;font-size:14px;line-height:1;font-weight:400;color:#fff;white-space:pre;z-index:5;left:40.50px;">Мастер бронирования</div>
<div style="position:absolute;top:69.23px;font-size:21px;line-height:1;font-weight:700;color:#111;white-space:pre;z-index:5;left:242.60px;transform:scaleX(1.0121);transform-origin:left center;">Мастер бронирования</div>
<div style="position:absolute;top:116.45px;font-size:12px;line-height:1;font-weight:400;color:#9a9a9a;white-space:pre;z-index:5;left:241.60px;transform:scaleX(0.9747);transform-origin:left center;">Гость (ФИО)</div>
<div style="position:absolute;top:116.45px;font-size:12px;line-height:1;font-weight:400;color:#9a9a9a;white-space:pre;z-index:5;left:518.10px;transform:scaleX(1.0123);transform-origin:left center;">Компания</div>
<div style="position:absolute;top:116.45px;font-size:12px;line-height:1;font-weight:400;color:#9a9a9a;white-space:pre;z-index:5;left:795.20px;transform:scaleX(1.0164);transform-origin:left center;">Компания-плательщик</div>
<div style="position:absolute;top:116.45px;font-size:12px;line-height:1;font-weight:400;color:#9a9a9a;white-space:pre;z-index:5;left:1072.10px;transform:scaleX(1.0557);transform-origin:left center;">Квота/группа</div>
<div style="position:absolute;top:137.70px;font-size:13px;line-height:1;font-weight:400;color:#222;white-space:pre;z-index:5;left:248.30px;transform:scaleX(1.0098);transform-origin:left center;">Евгений Черных</div>
<div style="position:absolute;top:137.70px;font-size:13px;line-height:1;font-weight:400;color:#222;white-space:pre;z-index:5;left:525.30px;transform:scaleX(1.0343);transform-origin:left center;">№300014 - Интур</div>
<div style="position:absolute;top:170.70px;font-size:13px;line-height:1;font-weight:700;color:#333;white-space:pre;z-index:5;left:278.20px;transform:scaleX(1.0259);transform-origin:left center;">Схема размещения и сроки</div>
<div style="position:absolute;top:189.05px;font-size:12px;line-height:1;font-weight:400;color:#777;white-space:pre;z-index:5;left:278.20px;transform:scaleX(1.0173);transform-origin:left center;">05-07 сен, заезд с 14:00, выезд до 12:00 1 взр.</div>
<div style="position:absolute;top:170.70px;font-size:13px;line-height:1;font-weight:700;color:#fff;white-space:pre;z-index:5;left:601.20px;">Тип комнаты и тарифы</div>
<div style="position:absolute;top:189.89px;font-size:11px;line-height:1;font-weight:400;color:#d3e3f3;white-space:pre;z-index:5;left:601.20px;transform:scaleX(1.0102);transform-origin:left center;">SGL RACK</div>
<div style="position:absolute;top:170.70px;font-size:13px;line-height:1;font-weight:700;color:#333;white-space:pre;z-index:5;left:810.50px;transform:scaleX(1.0222);transform-origin:left center;">Комната</div>
<div style="position:absolute;top:231.35px;font-size:12px;line-height:1;font-weight:700;color:#111;white-space:pre;z-index:5;left:249.70px;transform:scaleX(0.9506);transform-origin:left center;">Тариф</div>
<div style="position:absolute;top:220.70px;font-size:13px;line-height:1;font-weight:700;color:#111;white-space:pre;z-index:5;left:380.40px;transform:scaleX(0.8454);transform-origin:left center;">SGL</div>
<div style="position:absolute;top:237.96px;font-size:14px;line-height:1;font-weight:400;color:#111;white-space:pre;z-index:5;left:-118.00px;width:1000px;text-align:center;transform:scaleX(0.9286);transform-origin:center center;">7</div>
<div style="position:absolute;top:237.96px;font-size:14px;line-height:1;font-weight:400;color:#111;white-space:pre;z-index:5;left:-96.00px;width:1000px;text-align:center;transform:scaleX(0.9286);transform-origin:center center;">0</div>
<div style="position:absolute;top:220.70px;font-size:13px;line-height:1;font-weight:700;color:#111;white-space:pre;z-index:5;left:480.40px;transform:scaleX(0.8833);transform-origin:left center;">DBL</div>
<div style="position:absolute;top:237.96px;font-size:14px;line-height:1;font-weight:400;color:#111;white-space:pre;z-index:5;left:-18.00px;width:1000px;text-align:center;transform:scaleX(0.9286);transform-origin:center center;">6</div>
<div style="position:absolute;top:237.96px;font-size:14px;line-height:1;font-weight:400;color:#111;white-space:pre;z-index:5;left:4.00px;width:1000px;text-align:center;transform:scaleX(0.9286);transform-origin:center center;">0</div>
<div style="position:absolute;top:220.70px;font-size:13px;line-height:1;font-weight:700;color:#111;white-space:pre;z-index:5;left:580.40px;transform:scaleX(0.9592);transform-origin:left center;">TWN</div>
<div style="position:absolute;top:237.96px;font-size:14px;line-height:1;font-weight:400;color:#111;white-space:pre;z-index:5;left:82.00px;width:1000px;text-align:center;transform:scaleX(0.9286);transform-origin:center center;">0</div>
<div style="position:absolute;top:237.96px;font-size:14px;line-height:1;font-weight:400;color:#111;white-space:pre;z-index:5;left:104.00px;width:1000px;text-align:center;transform:scaleX(0.9286);transform-origin:center center;">0</div>
<div style="position:absolute;top:220.70px;font-size:13px;line-height:1;font-weight:700;color:#111;white-space:pre;z-index:5;left:680.40px;transform:scaleX(0.9809);transform-origin:left center;">TWN-K</div>
<div style="position:absolute;top:237.96px;font-size:14px;line-height:1;font-weight:400;color:#111;white-space:pre;z-index:5;left:186.00px;width:1000px;text-align:center;transform:scaleX(0.9286);transform-origin:center center;">0</div>
<div style="position:absolute;top:237.96px;font-size:14px;line-height:1;font-weight:400;color:#111;white-space:pre;z-index:5;left:208.00px;width:1000px;text-align:center;transform:scaleX(0.9286);transform-origin:center center;">0</div>
<div style="position:absolute;top:220.70px;font-size:13px;line-height:1;font-weight:700;color:#111;white-space:pre;z-index:5;left:780.40px;transform:scaleX(0.9308);transform-origin:left center;">LUX</div>
<div style="position:absolute;top:237.96px;font-size:14px;line-height:1;font-weight:400;color:#111;white-space:pre;z-index:5;left:282.00px;width:1000px;text-align:center;transform:scaleX(0.9286);transform-origin:center center;">4</div>
<div style="position:absolute;top:237.96px;font-size:14px;line-height:1;font-weight:400;color:#111;white-space:pre;z-index:5;left:304.00px;width:1000px;text-align:center;transform:scaleX(0.9286);transform-origin:center center;">0</div>
<div style="position:absolute;top:220.70px;font-size:13px;line-height:1;font-weight:700;color:#111;white-space:pre;z-index:5;left:872.50px;transform:scaleX(0.8999);transform-origin:left center;">HALL</div>
<div style="position:absolute;top:265.09px;font-size:14.2px;line-height:1;font-weight:400;color:#111;white-space:pre;z-index:5;left:259.40px;transform:scaleX(0.8134);transform-origin:left center;">RACK</div>
<div style="position:absolute;top:283.89px;font-size:11px;line-height:1;font-weight:400;color:#8a8a8a;white-space:pre;z-index:5;left:251.50px;">Базовый тариф</div>
<div style="position:absolute;top:265.09px;font-size:14.2px;line-height:1;font-weight:400;color:#111;white-space:pre;z-index:5;right:897.30px;transform:scaleX(0.9225);transform-origin:right center;">2 800,00р.</div>
<div style="position:absolute;top:283.89px;font-size:11px;line-height:1;font-weight:400;color:#9a9a9a;white-space:pre;z-index:5;right:897.30px;">5 600,00р.</div>
<div style="position:absolute;top:265.09px;font-size:14.2px;line-height:1;font-weight:400;color:#111;white-space:pre;z-index:5;right:797.30px;transform:scaleX(0.9225);transform-origin:right center;">3 500,00р.</div>
<div style="position:absolute;top:283.89px;font-size:11px;line-height:1;font-weight:400;color:#9a9a9a;white-space:pre;z-index:5;right:797.30px;">7 000,00р.</div>
<div style="position:absolute;top:265.09px;font-size:14.2px;line-height:1;font-weight:400;color:#111;white-space:pre;z-index:5;right:697.30px;transform:scaleX(0.9225);transform-origin:right center;">3 500,00р.</div>
<div style="position:absolute;top:283.89px;font-size:11px;line-height:1;font-weight:400;color:#9a9a9a;white-space:pre;z-index:5;right:697.30px;">7 000,00р.</div>
<div style="position:absolute;top:265.09px;font-size:14.2px;line-height:1;font-weight:400;color:#111;white-space:pre;z-index:5;right:597.30px;transform:scaleX(0.9225);transform-origin:right center;">1 700,00р.</div>
<div style="position:absolute;top:283.89px;font-size:11px;line-height:1;font-weight:400;color:#9a9a9a;white-space:pre;z-index:5;right:597.30px;">3 400,00р.</div>
<div style="position:absolute;top:265.09px;font-size:14.2px;line-height:1;font-weight:400;color:#111;white-space:pre;z-index:5;right:497.30px;transform:scaleX(0.9225);transform-origin:right center;">4 300,00р.</div>
<div style="position:absolute;top:283.89px;font-size:11px;line-height:1;font-weight:400;color:#9a9a9a;white-space:pre;z-index:5;right:497.30px;">8 600,00р.</div>
<div style="position:absolute;top:265.39px;font-size:11px;line-height:1;font-weight:400;color:#bdbdbd;white-space:pre;z-index:5;left:874.20px;transform:scaleX(0.8617);transform-origin:left center;">Тариф</div>
<div style="position:absolute;top:278.89px;font-size:11px;line-height:1;font-weight:400;color:#bdbdbd;white-space:pre;z-index:5;left:874.40px;transform:scaleX(0.9332);transform-origin:left center;">неприменим дл...</div>
<div style="position:absolute;top:305.09px;font-size:14.2px;line-height:1;font-weight:400;color:#111;white-space:pre;z-index:5;left:259.40px;transform:scaleX(0.8134);transform-origin:left center;">ZERO</div>
<div style="position:absolute;top:323.89px;font-size:11px;line-height:1;font-weight:400;color:#8a8a8a;white-space:pre;z-index:5;left:251.50px;">Льготный тариф</div>
<div style="position:absolute;top:305.09px;font-size:14.2px;line-height:1;font-weight:400;color:#111;white-space:pre;z-index:5;right:897.30px;transform:scaleX(0.9225);transform-origin:right center;">0,00р.</div>
<div style="position:absolute;top:323.89px;font-size:11px;line-height:1;font-weight:400;color:#9a9a9a;white-space:pre;z-index:5;right:897.30px;">0,00р.</div>
<div style="position:absolute;top:305.09px;font-size:14.2px;line-height:1;font-weight:400;color:#111;white-space:pre;z-index:5;right:797.30px;transform:scaleX(0.9225);transform-origin:right center;">0,00р.</div>
<div style="position:absolute;top:323.89px;font-size:11px;line-height:1;font-weight:400;color:#9a9a9a;white-space:pre;z-index:5;right:797.30px;">0,00р.</div>
<div style="position:absolute;top:305.09px;font-size:14.2px;line-height:1;font-weight:400;color:#111;white-space:pre;z-index:5;right:697.30px;transform:scaleX(0.9225);transform-origin:right center;">0,00р.</div>
<div style="position:absolute;top:323.89px;font-size:11px;line-height:1;font-weight:400;color:#9a9a9a;white-space:pre;z-index:5;right:697.30px;">0,00р.</div>
<div style="position:absolute;top:305.09px;font-size:14.2px;line-height:1;font-weight:400;color:#111;white-space:pre;z-index:5;right:597.30px;transform:scaleX(0.9225);transform-origin:right center;">0,00р.</div>
<div style="position:absolute;top:323.89px;font-size:11px;line-height:1;font-weight:400;color:#9a9a9a;white-space:pre;z-index:5;right:597.30px;">0,00р.</div>
<div style="position:absolute;top:305.09px;font-size:14.2px;line-height:1;font-weight:400;color:#111;white-space:pre;z-index:5;right:497.30px;transform:scaleX(0.9225);transform-origin:right center;">0,00р.</div>
<div style="position:absolute;top:323.89px;font-size:11px;line-height:1;font-weight:400;color:#9a9a9a;white-space:pre;z-index:5;right:497.30px;">0,00р.</div>
<div style="position:absolute;top:305.39px;font-size:11px;line-height:1;font-weight:400;color:#bdbdbd;white-space:pre;z-index:5;left:874.20px;transform:scaleX(0.8617);transform-origin:left center;">Тариф</div>
<div style="position:absolute;top:318.89px;font-size:11px;line-height:1;font-weight:400;color:#bdbdbd;white-space:pre;z-index:5;left:874.40px;transform:scaleX(0.9332);transform-origin:left center;">неприменим дл...</div>
<div style="position:absolute;top:345.09px;font-size:14.2px;line-height:1;font-weight:400;color:#111;white-space:pre;z-index:5;left:259.40px;transform:scaleX(0.8134);transform-origin:left center;">DISC-5</div>
<div style="position:absolute;top:363.89px;font-size:11px;line-height:1;font-weight:400;color:#8a8a8a;white-space:pre;z-index:5;left:251.50px;">Скидочный тариф 5%</div>
<div style="position:absolute;top:345.09px;font-size:14.2px;line-height:1;font-weight:400;color:#111;white-space:pre;z-index:5;right:897.30px;transform:scaleX(0.9225);transform-origin:right center;">2 800,00р.</div>
<div style="position:absolute;top:363.89px;font-size:11px;line-height:1;font-weight:400;color:#9a9a9a;white-space:pre;z-index:5;right:897.30px;">5 600,00р.</div>
<div style="position:absolute;top:345.09px;font-size:14.2px;line-height:1;font-weight:400;color:#111;white-space:pre;z-index:5;right:797.30px;transform:scaleX(0.9225);transform-origin:right center;">3 500,00р.</div>
<div style="position:absolute;top:363.89px;font-size:11px;line-height:1;font-weight:400;color:#9a9a9a;white-space:pre;z-index:5;right:797.30px;">7 000,00р.</div>
<div style="position:absolute;top:345.09px;font-size:14.2px;line-height:1;font-weight:400;color:#111;white-space:pre;z-index:5;right:697.30px;transform:scaleX(0.9225);transform-origin:right center;">3 500,00р.</div>
<div style="position:absolute;top:363.89px;font-size:11px;line-height:1;font-weight:400;color:#9a9a9a;white-space:pre;z-index:5;right:697.30px;">7 000,00р.</div>
<div style="position:absolute;top:345.09px;font-size:14.2px;line-height:1;font-weight:400;color:#111;white-space:pre;z-index:5;right:597.30px;transform:scaleX(0.9225);transform-origin:right center;">1 700,00р.</div>
<div style="position:absolute;top:363.89px;font-size:11px;line-height:1;font-weight:400;color:#9a9a9a;white-space:pre;z-index:5;right:597.30px;">3 400,00р.</div>
<div style="position:absolute;top:345.09px;font-size:14.2px;line-height:1;font-weight:400;color:#111;white-space:pre;z-index:5;right:497.30px;transform:scaleX(0.9225);transform-origin:right center;">4 300,00р.</div>
<div style="position:absolute;top:363.89px;font-size:11px;line-height:1;font-weight:400;color:#9a9a9a;white-space:pre;z-index:5;right:497.30px;">8 600,00р.</div>
<div style="position:absolute;top:345.39px;font-size:11px;line-height:1;font-weight:400;color:#bdbdbd;white-space:pre;z-index:5;left:874.20px;transform:scaleX(0.8617);transform-origin:left center;">Тариф</div>
<div style="position:absolute;top:358.89px;font-size:11px;line-height:1;font-weight:400;color:#bdbdbd;white-space:pre;z-index:5;left:874.40px;transform:scaleX(0.9332);transform-origin:left center;">неприменим дл...</div>
<div style="position:absolute;top:385.09px;font-size:14.2px;line-height:1;font-weight:400;color:#111;white-space:pre;z-index:5;left:259.40px;transform:scaleX(0.8134);transform-origin:left center;">RACKEURO</div>
<div style="position:absolute;top:403.89px;font-size:11px;line-height:1;font-weight:400;color:#8a8a8a;white-space:pre;z-index:5;left:251.50px;transform:scaleX(0.9050);transform-origin:left center;">RACK RATE (EURO)</div>
<div style="position:absolute;top:385.09px;font-size:14.2px;line-height:1;font-weight:400;color:#111;white-space:pre;z-index:5;right:897.30px;transform:scaleX(0.9225);transform-origin:right center;">3 149,00р.</div>
<div style="position:absolute;top:403.89px;font-size:11px;line-height:1;font-weight:400;color:#9a9a9a;white-space:pre;z-index:5;right:897.30px;">6 298,00р.</div>
<div style="position:absolute;top:385.09px;font-size:14.2px;line-height:1;font-weight:400;color:#111;white-space:pre;z-index:5;right:797.30px;transform:scaleX(0.9225);transform-origin:right center;">4 030,72р.</div>
<div style="position:absolute;top:403.89px;font-size:11px;line-height:1;font-weight:400;color:#9a9a9a;white-space:pre;z-index:5;right:797.30px;">8 061,44р.</div>
<div style="position:absolute;top:385.09px;font-size:14.2px;line-height:1;font-weight:400;color:#111;white-space:pre;z-index:5;right:697.30px;transform:scaleX(0.9225);transform-origin:right center;">4 030,72р.</div>
<div style="position:absolute;top:403.89px;font-size:11px;line-height:1;font-weight:400;color:#9a9a9a;white-space:pre;z-index:5;right:697.30px;">8 061,44р.</div>
<div style="position:absolute;top:385.39px;font-size:11px;line-height:1;font-weight:400;color:#bdbdbd;white-space:pre;z-index:5;left:674.20px;transform:scaleX(0.8617);transform-origin:left center;">Тариф</div>
<div style="position:absolute;top:398.89px;font-size:11px;line-height:1;font-weight:400;color:#bdbdbd;white-space:pre;z-index:5;left:674.40px;transform:scaleX(0.9332);transform-origin:left center;">неприменим дл...</div>
<div style="position:absolute;top:385.09px;font-size:14.2px;line-height:1;font-weight:400;color:#111;white-space:pre;z-index:5;right:497.30px;transform:scaleX(0.9225);transform-origin:right center;">5 668,20р.</div>
<div style="position:absolute;top:403.89px;font-size:11px;line-height:1;font-weight:400;color:#9a9a9a;white-space:pre;z-index:5;right:497.30px;">11 336,40р.</div>
<div style="position:absolute;top:385.39px;font-size:11px;line-height:1;font-weight:400;color:#bdbdbd;white-space:pre;z-index:5;left:874.20px;transform:scaleX(0.8617);transform-origin:left center;">Тариф</div>
<div style="position:absolute;top:398.89px;font-size:11px;line-height:1;font-weight:400;color:#bdbdbd;white-space:pre;z-index:5;left:874.40px;transform:scaleX(0.9332);transform-origin:left center;">неприменим дл...</div>
<div style="position:absolute;top:214.95px;font-size:12px;line-height:1;font-weight:400;color:#9a9a9a;white-space:pre;z-index:5;left:1162.90px;">Скидка</div>
<div style="position:absolute;top:236.70px;font-size:13px;line-height:1;font-weight:400;color:#777;white-space:pre;z-index:5;left:1166.20px;transform:scaleX(0.9870);transform-origin:left center;">не предоставляется</div>
<div style="position:absolute;top:266.35px;font-size:12px;line-height:1;font-weight:400;color:#9a9a9a;white-space:pre;z-index:5;left:1162.90px;">Пакеты</div>
<div style="position:absolute;top:285.28px;font-size:13.5px;line-height:1;font-weight:700;color:#111;white-space:pre;z-index:5;left:1190.10px;transform:scaleX(0.8618);transform-origin:left center;">Услуга</div>
<div style="position:absolute;top:285.28px;font-size:13.5px;line-height:1;font-weight:700;color:#111;white-space:pre;z-index:5;left:1236.20px;transform:scaleX(0.9550);transform-origin:left center;">К-во</div>
<div style="position:absolute;top:309.69px;font-size:14.2px;line-height:1;font-weight:400;color:#111;white-space:pre;z-index:5;left:1189.20px;transform:scaleX(0.8310);transform-origin:left center;">BRKF</div>
<div style="position:absolute;top:333.69px;font-size:14.2px;line-height:1;font-weight:400;color:#111;white-space:pre;z-index:5;left:1189.20px;transform:scaleX(0.8310);transform-origin:left center;">LNCH</div>
<div style="position:absolute;top:357.69px;font-size:14.2px;line-height:1;font-weight:400;color:#111;white-space:pre;z-index:5;left:1189.20px;transform:scaleX(0.8310);transform-origin:left center;">DINN</div>
<div style="position:absolute;top:381.69px;font-size:14.2px;line-height:1;font-weight:400;color:#111;white-space:pre;z-index:5;left:1189.20px;transform:scaleX(0.8310);transform-origin:left center;">SPA</div>
<div style="position:absolute;top:418.88px;font-size:13.5px;line-height:1;font-weight:400;color:#111;white-space:pre;z-index:5;left:1168.30px;transform:scaleX(0.9329);transform-origin:left center;">Дата</div>
<div style="position:absolute;top:418.88px;font-size:13.5px;line-height:1;font-weight:400;color:#111;white-space:pre;z-index:5;left:1232.50px;transform:scaleX(0.9681);transform-origin:left center;">Прожив.</div>
<div style="position:absolute;top:418.88px;font-size:13.5px;line-height:1;font-weight:400;color:#111;white-space:pre;z-index:5;left:1303.30px;transform:scaleX(0.9530);transform-origin:left center;">Пакет</div>
<div style="position:absolute;top:446.39px;font-size:14.2px;line-height:1;font-weight:400;color:#111;white-space:pre;z-index:5;left:1168.30px;transform:scaleX(0.9155);transform-origin:left center;">05.09</div>
<div style="position:absolute;top:446.39px;font-size:14.2px;line-height:1;font-weight:400;color:#111;white-space:pre;z-index:5;left:1232.50px;transform:scaleX(0.9200);transform-origin:left center;">2 800,00р.</div>
<div style="position:absolute;top:446.39px;font-size:14.2px;line-height:1;font-weight:400;color:#111;white-space:pre;z-index:5;left:1302.60px;transform:scaleX(0.9155);transform-origin:left center;">0,00р.</div>
<div style="position:absolute;top:472.09px;font-size:14.2px;line-height:1;font-weight:400;color:#111;white-space:pre;z-index:5;left:1168.30px;transform:scaleX(0.9155);transform-origin:left center;">06.09</div>
<div style="position:absolute;top:472.09px;font-size:14.2px;line-height:1;font-weight:400;color:#111;white-space:pre;z-index:5;left:1232.50px;transform:scaleX(0.9200);transform-origin:left center;">2 800,00р.</div>
<div style="position:absolute;top:472.09px;font-size:14.2px;line-height:1;font-weight:400;color:#111;white-space:pre;z-index:5;left:1302.60px;transform:scaleX(0.9155);transform-origin:left center;">0,00р.</div>
<div style="position:absolute;top:569.65px;font-size:12px;line-height:1;font-weight:700;color:#777;white-space:pre;z-index:5;right:66.70px;transform:scaleX(1.0094);transform-origin:right center;">5600,00</div>
<div style="position:absolute;top:569.65px;font-size:12px;line-height:1;font-weight:700;color:#777;white-space:pre;z-index:5;right:22.50px;">0</div>
<div style="position:absolute;top:599.00px;font-size:13px;line-height:1;font-weight:400;color:#222;white-space:pre;z-index:5;left:1204.20px;transform:scaleX(0.9674);transform-origin:left center;">В валюте тарифа</div>
<div style="position:absolute;top:644.66px;font-size:14px;line-height:1;font-weight:400;color:#fff;white-space:pre;z-index:5;left:280.10px;transform:scaleX(1.0479);transform-origin:left center;">Создать бронь</div>
<div style="position:absolute;top:645.30px;font-size:13px;line-height:1;font-weight:400;color:#222;white-space:pre;z-index:5;left:447.40px;transform:scaleX(0.9869);transform-origin:left center;">В лист ожидания</div>
<div style="position:absolute;top:644.50px;font-size:13px;line-height:1;font-weight:400;color:#cfcfcf;white-space:pre;z-index:5;left:561.20px;transform:scaleX(1.0270);transform-origin:left center;">приоритет</div>
<div style="position:absolute;top:644.73px;font-size:14.5px;line-height:1;font-weight:400;color:#2f73ba;white-space:pre;z-index:5;left:1270.60px;transform:scaleX(1.0043);transform-origin:left center;">Закрыть</div>
</body></html>
